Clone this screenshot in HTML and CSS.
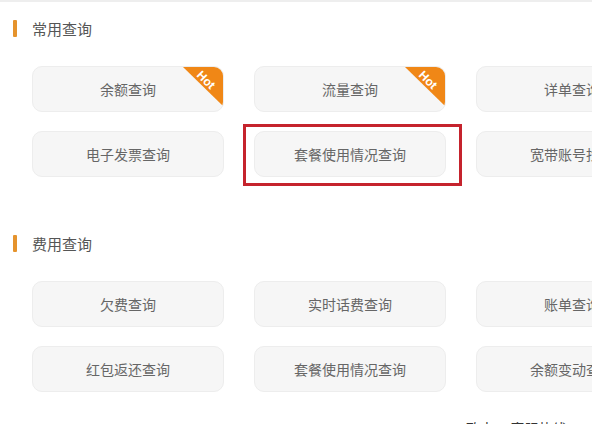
FILE: index.html
```html
<!DOCTYPE html>
<html lang="zh-CN">
<head>
  <meta charset="UTF-8">
  <meta name="viewport" content="width=device-width, initial-scale=1">
  <title>查询</title>
  <link rel="stylesheet" href="styles.css">
</head>
<body>
  <div class="page">

    <!-- 常用查询 -->
    <div class="section">
      <div class="section-title"><span class="bar"></span>常用查询</div>
      <div class="grid">
        <a class="item hot">余额查询<span class="badge"><span>Hot</span></span></a>
        <a class="item hot">流量查询<span class="badge"><span>Hot</span></span></a>
        <a class="item">详单查询</a>
        <a class="item">电子发票查询</a>
        <a class="item marked">套餐使用情况查询<span class="mark"></span></a>
        <a class="item">宽带账号找回</a>
      </div>
    </div>

    <!-- 费用查询 -->
    <div class="section second">
      <div class="section-title"><span class="bar"></span>费用查询</div>
      <div class="grid">
        <a class="item">欠费查询</a>
        <a class="item">实时话费查询</a>
        <a class="item">账单查询</a>
        <a class="item">红包返还查询</a>
        <a class="item">套餐使用情况查询</a>
        <a class="item">余额变动查询</a>
      </div>
    </div>

    <div class="footer-note">致电 @客服热线</div>
  </div>
</body>
</html>
```

FILE: styles.css
```css
html, body {
  margin: 0;
  padding: 0;
  background: #fff;
}
body {
  font-family: "Noto Sans CJK SC", "Noto Sans", sans-serif;
  overflow: hidden;
}
.page {
  width: 592px;
  height: 424px;
  overflow: hidden;
  box-sizing: border-box;
  padding-top: 19px;
  border-top: 2px solid #eeeeee;
  position: relative;
}
.section-title {
  display: flex;
  align-items: center;
  height: 18px;
  padding-left: 13px;
  font-size: 15px;
  color: #555;
  margin-top: -2px;
}
.bar {
  width: 4px;
  height: 17px;
  background: #e5932d;
  margin-right: 15px;
  border-radius: 1px;
}
.section.second {
  margin-top: 59px;
}
.grid {
  display: grid;
  grid-template-columns: repeat(3, 192px);
  grid-auto-rows: 46px;
  column-gap: 30px;
  row-gap: 19px;
  padding-left: 32px;
  margin-top: 29px;
  width: 700px;
}
.second .grid {
  margin-top: 29px;
}
.item {
  position: relative;
  display: flex;
  align-items: center;
  justify-content: center;
  background: #f6f6f6;
  border: 1px solid #ededed;
  border-radius: 10px;
  box-sizing: border-box;
  font-size: 14px;
  color: #666;
  white-space: nowrap;
  cursor: pointer;
}
.item.hot {
  overflow: hidden;
}
.badge {
  position: absolute;
  top: 0;
  right: 0;
  width: 40px;
  height: 39px;
  background: #f08716;
  clip-path: polygon(0 0, 100% 0, 100% 100%);
}
.badge span {
  position: absolute;
  top: 6px;
  right: 2px;
  width: 30px;
  text-align: center;
  font-family: "Liberation Sans", Arial, sans-serif;
  font-size: 12px;
  font-weight: bold;
  color: #fff;
  transform: rotate(45deg);
}
.mark {
  position: absolute;
  top: -8px;
  left: -12px;
  right: -17px;
  bottom: -10px;
  border: 3px solid #c5232d;
  pointer-events: none;
}
.footer-note {
  position: absolute;
  left: 466px;
  top: 416px;
  font-size: 14px;
  color: #333;
  white-space: nowrap;
}
```
